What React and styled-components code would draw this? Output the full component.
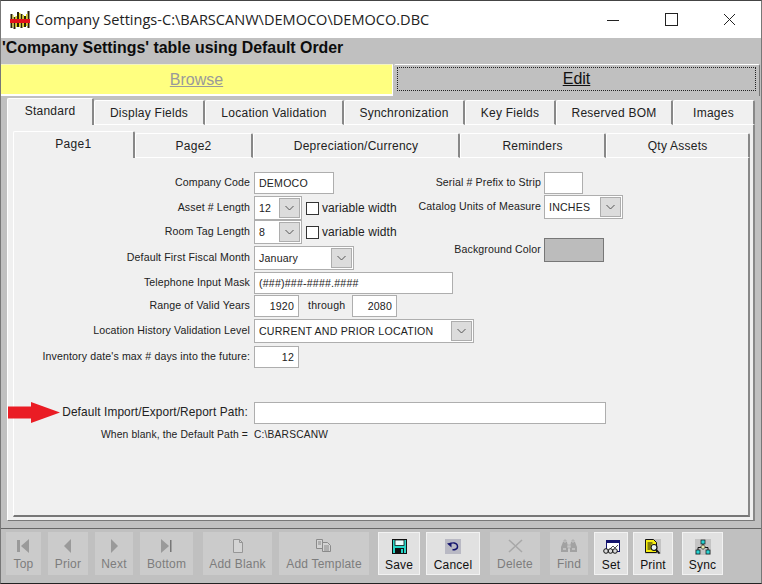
import styled, { createGlobalStyle } from "styled-components";

const GlobalStyle = createGlobalStyle`
  html, body {
    margin: 0;
    padding: 0;
    background: #c0c0c0;
  }
  * {
    box-sizing: border-box;
  }
`;

const Window = styled.div`
  width: 762px;
  height: 584px;
  display: flex;
  flex-direction: column;
  overflow: hidden;
  background: #c0c0c0;
  border-top: 1px solid #444;
  border-left: 1px solid #777;
  border-right: 1px solid #777;
  border-bottom: 1px solid #222;
  font-family: "Liberation Sans", Arial, sans-serif;
  color: #111;
`;

const TitleBar = styled.div`
  height: 37px;
  flex: none;
  display: flex;
  align-items: center;
  background: #fff;
  padding: 0 3px 0 9px;
`;

const TitleText = styled.div`
  font-family: "Open Sans", "Noto Sans", sans-serif;
  font-size: 14.55px;
  margin-left: 5px;
  padding-bottom: 1px;
  color: #222;
  flex: 1;
  white-space: nowrap;
`;

const WinButton = styled.div`
  width: 58px;
  height: 37px;
  display: flex;
  align-items: center;
  justify-content: center;
`;

const MessageBar = styled.div`
  height: 26px;
  flex: none;
  font-weight: bold;
  font-size: 15.9px;
  line-height: 20px;
  padding-left: 1px;
  color: #0c0c0c;
  white-space: nowrap;
`;

const ModeRow = styled.div`
  height: 32px;
  flex: none;
  display: flex;
`;

const BrowseMode = styled.div`
  width: 392px;
  height: 32px;
  background: #ffff80;
  border-top: 1px solid #f4f4c0;
  border-right: 1px solid #fff;
  border-bottom: 2px solid #fff;
  display: flex;
  align-items: center;
  justify-content: center;
  font-size: 16px;
  color: #9a9a9a;
  text-decoration: underline;
`;

const EditMode = styled.div`
  width: 366px;
  height: 32px;
  margin-left: 1px;
  padding: 2px 3px 5px 3px;
  border-top: 1px solid #fff;
  border-right: 1px solid #777;
  background: #c0c0c0;
  border-radius: 2px 2px 0 0;
`;

const EditFocus = styled.div`
  height: 100%;
  border: 1px dotted #222;
  display: flex;
  align-items: center;
  justify-content: center;
  font-size: 16px;
  color: #111;
  text-decoration: underline;
`;

const OuterTabs = styled.div`
  margin: 0 0 0 6px;
  width: 748px;
  height: 425px;
  flex: none;
  display: flex;
  flex-direction: column;
`;

const TabStrip = styled.div`
  height: ${(p) => p.$height}px;
  flex: none;
  display: flex;
  align-items: flex-end;
`;

const Tab = styled.div`
  width: ${(p) => p.$width}px;
  height: ${(p) => (p.$active ? 27 : 25)}px;
  display: flex;
  align-items: center;
  justify-content: center;
  padding-bottom: ${(p) => (p.$active ? 2 : 0)}px;
  padding-top: ${(p) => (p.$active ? 0 : 1)}px;
  font-size: 12px;
  letter-spacing: 0.25px;
  background: #f0f0f0;
  color: #222;
  border-top: 1px solid #fff;
  border-left: 1px solid #fff;
  border-right: 2px solid #888;
  border-radius: 2px 2px 0 0;
  border-bottom: ${(p) => (p.$active ? "none" : "1px solid #fff")};
  white-space: nowrap;
`;

const OuterBody = styled.div`
  height: 396px;
  background: #f0f0f0;
  padding: 6px 3px 0 5px;
  border-left: 1px solid #fff;
  border-bottom: 1px solid #777;
  border-right: 2px solid #888;
`;

const InnerBody = styled.div`
  height: 359px;
  background: #f0f0f0;
  border-left: 1px solid #fff;
  border-right: 2px solid #888;
  border-bottom: 2px solid #777;
  padding-top: 14px;
`;

const TopSection = styled.div`
  display: flex;
  height: 230px;
`;

const LeftColumn = styled.div`
  width: 386px;
  flex: none;
`;

const RightColumn = styled.div`
  flex: 1;
`;

const Row = styled.div`
  display: flex;
  align-items: center;
  height: ${(p) => p.$height || 24}px;
  margin-bottom: ${(p) => p.$gap ?? 2}px;
`;

const Label = styled.div`
  width: ${(p) => p.$width || 236}px;
  flex: none;
  text-align: right;
  margin-right: ${(p) => p.$space || 4}px;
  font-size: ${(p) => p.$size || 10.6}px;
  letter-spacing: 0.12px;
  color: #222;
  white-space: nowrap;
  padding-bottom: 2px;
  display: flex;
  justify-content: flex-end;
  align-items: center;
`;

const Field = styled.div`
  width: ${(p) => p.$width}px;
  height: ${(p) => p.$height || 22}px;
  flex: none;
  background: #fff;
  border: 1px solid #aeaeae;
  font-size: 10.6px;
  letter-spacing: 0.2px;
  color: #222;
  display: flex;
  align-items: center;
  justify-content: ${(p) => (p.$right ? "flex-end" : "flex-start")};
  padding: ${(p) => (p.$right ? "0 4px 0 0" : "0 0 0 4px")};
`;

const Combo = styled(Field)`
  height: 24px;
  padding: 0 1px 0 4px;
  justify-content: space-between;
`;

const ComboButton = styled.div`
  width: 21px;
  height: 20px;
  flex: none;
  background: #dcdcdc;
  border: 1px solid #adadad;
  display: flex;
  align-items: center;
  justify-content: center;
`;

const CheckBox = styled.div`
  width: 13px;
  height: 13px;
  flex: none;
  margin-left: 4px;
  background: #fff;
  border: 1px solid #333;
`;

const CheckLabel = styled.div`
  font-size: 12px;
  letter-spacing: 0.1px;
  margin-left: 3px;
  color: #222;
  white-space: nowrap;
`;

const Between = styled.div`
  font-size: 10.6px;
  letter-spacing: 0.2px;
  color: #222;
  width: 53px;
  padding-left: 9px;
  padding-bottom: 2px;
`;

const Swatch = styled.div`
  width: 60px;
  height: 24px;
  background: #bcbcbc;
  border: 1px solid #777;
`;

const PathHint = styled.div`
  display: flex;
  font-size: 10.2px;
  letter-spacing: 0.2px;
  color: #222;
  margin-top: 5px;
`;

const Arrow = styled.svg`
  flex: none;
  margin-right: 1px;
`;

const Toolbar = styled.div`
  height: 54px;
  flex: none;
  margin-top: 7px;
  border-top: 1px solid #666;
  display: flex;
  align-items: flex-start;
  padding: 3px 0 0 5px;
`;

const ToolButton = styled.div`
  width: ${(p) => p.$width}px;
  height: 43px;
  flex: none;
  margin-right: ${(p) => p.$gap}px;
  background: ${(p) => (p.$enabled ? "#e1e1e1" : "#cbcbcb")};
  border: ${(p) => (p.$enabled ? "1px solid #f2f2f2" : "none")};
  color: ${(p) => (p.$enabled ? "#111" : "#7d7d7d")};
  font-size: 12px;
  letter-spacing: 0.2px;
  display: flex;
  flex-direction: column;
  align-items: center;
  white-space: nowrap;
`;

const ToolIcon = styled.div`
  height: 25px;
  display: flex;
  align-items: center;
  justify-content: center;
  padding-top: 2px;
`;

const Chevron = () => (
  <svg width="9" height="6" viewBox="0 0 9 6">
    <path d="M0.5 1 L4.5 5 L8.5 1" fill="none" stroke="#555" strokeWidth="1" />
  </svg>
);

const Logo = () => (
  <svg width="20" height="20" viewBox="0 0 20 20">
    <path d="M0.5 4h2v14h-2zM3.5 7h2v12h-2zM7 2h2v15H7zM10.5 4h2v14h-2zM14 6h2v11h-2zM17.5 1h2v17h-2z" fill="#2a2208" />
    <path d="M2.5 5h1v12h-1zM5.5 6h1.5v11H5.5zM9 3h1.5v14H9zM12.5 5H14v12h-1.5zM16 4h1.5v12H16z" fill="#e0d020" />
    <rect x="0" y="9" width="20" height="4" fill="#e3101a" />
  </svg>
);

const MinimizeIcon = () => (
  <svg width="14" height="14" viewBox="0 0 14 14">
    <path d="M1 7.5h12" stroke="#222" strokeWidth="1" />
  </svg>
);

const MaximizeIcon = () => (
  <svg width="13" height="13" viewBox="0 0 13 13">
    <rect x="0.5" y="0.5" width="12" height="12" fill="none" stroke="#222" />
  </svg>
);

const CloseIcon = () => (
  <svg width="13" height="13" viewBox="0 0 13 13">
    <path d="M1 1l11 11M12 1L1 12" stroke="#222" strokeWidth="1" />
  </svg>
);

const TopIcon = () => (
  <svg width="13" height="14" viewBox="0 0 13 14">
    <rect x="0" y="1" width="3" height="12" fill="#9a9a9a" />
    <path d="M12 0v14L4 7z" fill="#9a9a9a" />
  </svg>
);

const PriorIcon = () => (
  <svg width="10" height="14" viewBox="0 0 10 14">
    <path d="M8 0v14L1 7z" fill="#9a9a9a" />
  </svg>
);

const NextIcon = () => (
  <svg width="10" height="14" viewBox="0 0 10 14">
    <path d="M2 0v14L9 7z" fill="#9a9a9a" />
  </svg>
);

const BottomIcon = () => (
  <svg width="13" height="14" viewBox="0 0 13 14">
    <path d="M1 0v14L9 7z" fill="#9a9a9a" />
    <rect x="10" y="1" width="1.5" height="12" fill="#777" />
  </svg>
);

const BlankIcon = () => (
  <svg width="12" height="14" viewBox="0 0 12 14">
    <path d="M1.5 0.5h6l3 3v10h-9z" fill="#d4d4d4" stroke="#969696" />
    <path d="M7.5 0.5v3h3" fill="none" stroke="#969696" />
  </svg>
);

const TemplateIcon = () => (
  <svg width="16" height="13" viewBox="0 0 16 13">
    <path d="M0.5 0.5h6v9h-6z" fill="#d4d4d4" stroke="#8a8a8a" />
    <path d="M6.5 3.5h5l3 3v6h-8z" fill="#d4d4d4" stroke="#8a8a8a" />
    <path d="M2 3h3M2 5h3M8 7h5M8 9h5M8 11h5" stroke="#8a8a8a" />
  </svg>
);

const SaveIcon = () => (
  <svg width="15" height="15" viewBox="0 0 15 15">
    <rect x="0.5" y="0.5" width="14" height="14" fill="#29d6c8" stroke="#111" />
    <rect x="3" y="1" width="9" height="5.5" fill="#eaffff" stroke="#111" strokeWidth="0.8" />
    <rect x="3" y="9" width="9" height="5.5" fill="#111" />
    <rect x="9" y="10" width="2" height="4" fill="#29d6c8" />
  </svg>
);

const CancelIcon = () => (
  <svg width="16" height="15" viewBox="0 0 16 15">
    <rect width="16" height="15" fill="#b9b9c4" />
    <path d="M4 5.5C7 3 12 3.5 12.5 7S9 11 7.5 10.5" fill="none" stroke="#14146e" strokeWidth="1.4" />
    <path d="M2 4.5l4.5-1v5z" fill="#14146e" />
  </svg>
);

const DeleteIcon = () => (
  <svg width="15" height="14" viewBox="0 0 15 14">
    <path d="M1 1l13 12M14 1L1 13" stroke="#a8a8a8" strokeWidth="1.6" />
  </svg>
);

const FindIcon = () => (
  <svg width="16" height="14" viewBox="0 0 16 14">
    <path d="M2 3h4l1 5v5H0V8zM10 3h4l2 5v5H9V8z" fill="#a2a2a2" />
    <path d="M3 1h2v3H3zM11 1h2v3h-2zM6 6h4v3H6z" fill="#c6c6c6" stroke="#a2a2a2" strokeWidth="0.6" />
    <path d="M2 10h3M11 10h3" stroke="#dcdcdc" />
  </svg>
);

const SetIcon = () => (
  <svg width="17" height="14" viewBox="0 0 17 14">
    <rect x="3.5" y="0.5" width="13" height="11" fill="#fff" stroke="#14146e" />
    <rect x="3.5" y="0.5" width="13" height="2.5" fill="#14146e" />
    <path d="M7 9l3-3 2 2 3-3" fill="none" stroke="#555" />
    <circle cx="3" cy="11" r="2.3" fill="#dcdcdc" stroke="#111" />
    <circle cx="7.5" cy="11" r="2.3" fill="#dcdcdc" stroke="#111" />
    <circle cx="12" cy="11" r="2.3" fill="#dcdcdc" stroke="#111" />
  </svg>
);

const PrintIcon = () => (
  <svg width="16" height="15" viewBox="0 0 16 15">
    <rect x="0" y="0" width="16" height="15" fill="#c4c4c4" />
    <path d="M0.5 0.5h8l3 3v10h-11z" fill="#f6ee10" stroke="#111" />
    <path d="M2.5 4h5M2.5 6h4M2.5 8h3M2.5 10h3" stroke="#111" />
    <circle cx="9" cy="8.5" r="3" fill="#e8f4f4" stroke="#111" strokeWidth="1.2" />
    <path d="M11 10.5l3.5 4" stroke="#111" strokeWidth="1.8" />
  </svg>
);

const SyncIcon = () => (
  <svg width="16" height="16" viewBox="0 0 16 16">
    <rect width="16" height="16" fill="#c4c4c4" />
    <path d="M8 5v3M3 11V8.5h10V11" fill="none" stroke="#111" />
    <rect x="6" y="1" width="4" height="4" fill="#2ad4d4" stroke="#111" strokeWidth="0.7" />
    <path d="M8 5.5l2.5 2.5L8 10.5 5.5 8z" fill="#e8e8b0" stroke="#111" strokeWidth="0.7" />
    <rect x="1" y="11" width="4" height="4" fill="#2ad4d4" stroke="#111" strokeWidth="0.7" />
    <rect x="11" y="11" width="4" height="4" fill="#2ad4d4" stroke="#111" strokeWidth="0.7" />
  </svg>
);

const outerTabs = [
  ["Standard", 87, true],
  ["Display Fields", 111],
  ["Location Validation", 139],
  ["Synchronization", 121],
  ["Key Fields", 91],
  ["Reserved BOM", 117],
  ["Images", 82],
];

const innerTabs = [
  ["Page1", 122, true],
  ["Page2", 119],
  ["Depreciation/Currency", 207],
  ["Reminders", 147],
  ["Qty Assets", 144],
];

const tools = [
  ["Top", 35, 7, TopIcon],
  ["Prior", 40, 7, PriorIcon],
  ["Next", 38, 7, NextIcon],
  ["Bottom", 53, 10, BottomIcon],
  ["Add Blank", 69, 7, BlankIcon],
  ["Add Template", 90, 9, TemplateIcon],
  ["Save", 42, 6, SaveIcon, true],
  ["Cancel", 54, 10, CancelIcon, true],
  ["Delete", 50, 10, DeleteIcon],
  ["Find", 38, 6, FindIcon],
  ["Set", 34, 5, SetIcon, true],
  ["Print", 40, 9, PrintIcon, true],
  ["Sync", 41, 0, SyncIcon, true],
];

export default function App() {
  return (
    <>
      <GlobalStyle />
      <Window>
        <TitleBar>
          <Logo />
          <TitleText>Company Settings-C:\BARSCANW\DEMOCO\DEMOCO.DBC</TitleText>
          <WinButton><MinimizeIcon /></WinButton>
          <WinButton><MaximizeIcon /></WinButton>
          <WinButton><CloseIcon /></WinButton>
        </TitleBar>
        <MessageBar>'Company Settings' table using Default Order</MessageBar>
        <ModeRow>
          <BrowseMode>Browse</BrowseMode>
          <EditMode>
            <EditFocus>Edit</EditFocus>
          </EditMode>
        </ModeRow>
        <OuterTabs>
          <TabStrip $height={29}>
            {outerTabs.map(([name, width, active]) => (
              <Tab key={name} $width={width} $active={active}>{name}</Tab>
            ))}
          </TabStrip>
          <OuterBody>
            <TabStrip $height={27}>
              {innerTabs.map(([name, width, active]) => (
                <Tab key={name} $width={width} $active={active}>{name}</Tab>
              ))}
            </TabStrip>
            <InnerBody>
              <TopSection>
                <LeftColumn>
                  <Row $height={22} $gap={2}>
                    <Label>Company Code</Label>
                    <Field $width={80}>DEMOCO</Field>
                  </Row>
                  <Row $height={24} $gap={0}>
                    <Label>Asset # Length</Label>
                    <Combo $width={48}>12<ComboButton><Chevron /></ComboButton></Combo>
                    <CheckBox />
                    <CheckLabel>variable width</CheckLabel>
                  </Row>
                  <Row $height={24} $gap={2}>
                    <Label>Room Tag Length</Label>
                    <Combo $width={48}>8<ComboButton><Chevron /></ComboButton></Combo>
                    <CheckBox />
                    <CheckLabel>variable width</CheckLabel>
                  </Row>
                  <Row $height={24} $gap={2}>
                    <Label>Default First Fiscal Month</Label>
                    <Combo $width={100}>January<ComboButton><Chevron /></ComboButton></Combo>
                  </Row>
                  <Row $height={22} $gap={1}>
                    <Label>Telephone Input Mask</Label>
                    <Field $width={199}>(###)###-####.####</Field>
                  </Row>
                  <Row $height={22} $gap={2}>
                    <Label>Range of Valid Years</Label>
                    <Field $width={45} $right>1920</Field>
                    <Between>through</Between>
                    <Field $width={45} $right>2080</Field>
                  </Row>
                  <Row $height={24} $gap={3}>
                    <Label>Location History Validation Level</Label>
                    <Combo $width={220}>CURRENT AND PRIOR LOCATION<ComboButton><Chevron /></ComboButton></Combo>
                  </Row>
                  <Row $height={22} $gap={0}>
                    <Label>Inventory date's max # days into the future:</Label>
                    <Field $width={45} $right>12</Field>
                  </Row>
                </LeftColumn>
                <RightColumn>
                  <Row $height={22} $gap={1}>
                    <Label $width={141} $space={3}>Serial # Prefix to Strip</Label>
                    <Field $width={39} />
                  </Row>
                  <Row $height={24} $gap={19}>
                    <Label $width={141} $space={3}>Catalog Units of Measure</Label>
                    <Combo $width={79}>INCHES<ComboButton><Chevron /></ComboButton></Combo>
                  </Row>
                  <Row $height={24}>
                    <Label $width={141} $space={3}>Background Color</Label>
                    <Swatch />
                  </Row>
                </RightColumn>
              </TopSection>
              <Row $height={22} $gap={0}>
                <Label $size={11.85} $space={6} $width={234}>
                  <Arrow width="53" height="21" viewBox="0 0 53 21">
                    <path d="M0 4.5h23V0l29 10.5-29 10.5v-4.5H0z" fill="#ea1c24" />
                  </Arrow>
                  Default Import/Export/Report Path:
                </Label>
                <Field $width={352} />
              </Row>
              <PathHint>
                <Label $size={10.35} $space={6} $width={234}>When blank, the Default Path =</Label>
                C:\BARSCANW
              </PathHint>
            </InnerBody>
          </OuterBody>
        </OuterTabs>
        <Toolbar>
          {tools.map(([name, width, gap, Icon, enabled]) => (
            <ToolButton key={name} $width={width} $gap={gap} $enabled={enabled}>
              <ToolIcon><Icon /></ToolIcon>
              {name}
            </ToolButton>
          ))}
        </Toolbar>
      </Window>
    </>
  );
}
